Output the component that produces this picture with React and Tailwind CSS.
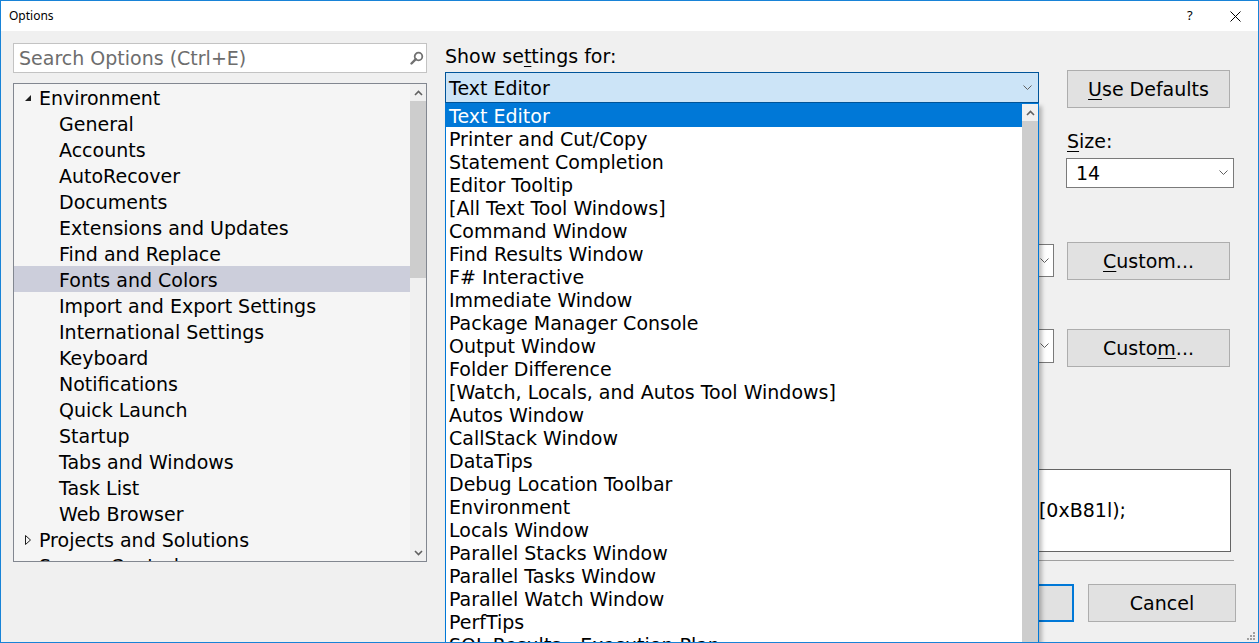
import React from 'react';

const treeItems = [
  { label: 'Environment', level: 0, glyph: 'open' },
  { label: 'General', level: 1 },
  { label: 'Accounts', level: 1 },
  { label: 'AutoRecover', level: 1 },
  { label: 'Documents', level: 1 },
  { label: 'Extensions and Updates', level: 1 },
  { label: 'Find and Replace', level: 1 },
  { label: 'Fonts and Colors', level: 1, selected: true },
  { label: 'Import and Export Settings', level: 1 },
  { label: 'International Settings', level: 1 },
  { label: 'Keyboard', level: 1 },
  { label: 'Notifications', level: 1 },
  { label: 'Quick Launch', level: 1 },
  { label: 'Startup', level: 1 },
  { label: 'Tabs and Windows', level: 1 },
  { label: 'Task List', level: 1 },
  { label: 'Web Browser', level: 1 },
  { label: 'Projects and Solutions', level: 0, glyph: 'closed' },
  { label: 'Source Control', level: 0, glyph: 'closed' },
];

const showItems = [
  'Text Editor',
  'Printer and Cut/Copy',
  'Statement Completion',
  'Editor Tooltip',
  '[All Text Tool Windows]',
  'Command Window',
  'Find Results Window',
  'F# Interactive',
  'Immediate Window',
  'Package Manager Console',
  'Output Window',
  'Folder Difference',
  '[Watch, Locals, and Autos Tool Windows]',
  'Autos Window',
  'CallStack Window',
  'DataTips',
  'Debug Location Toolbar',
  'Environment',
  'Locals Window',
  'Parallel Stacks Window',
  'Parallel Tasks Window',
  'Parallel Watch Window',
  'PerfTips',
  'SQL Results - Execution Plan',
];

function Chevron({ className = '' }) {
  return (
    <svg width="9" height="6" viewBox="0 0 9 6" className={className}>
      <path d="M0.5 0.5 L4.5 4.5 L8.5 0.5" fill="none" stroke="#606060" strokeWidth="1" />
    </svg>
  );
}

function Arrow({ up }) {
  return (
    <svg width="9" height="6" viewBox="0 0 9 6">
      <path d={up ? 'M1 5 L4.5 1.5 L8 5' : 'M1 1 L4.5 4.5 L8 1'} fill="none" stroke="#606060" strokeWidth="1.6" />
    </svg>
  );
}

function Button({ children, className = '' }) {
  return (
    <div className={`h-[38px] bg-[#e1e1e1] border border-[#adadad] flex items-center justify-center ${className}`}>
      {children}
    </div>
  );
}

export default function App() {
  return (
    <div className="w-[1259px] h-[643px] border border-[#1883d7] bg-[#f0f0f0] flex flex-col overflow-hidden relative text-black font-['DejaVu_Sans',Verdana,sans-serif] text-[19px]">
      {/* title bar */}
      <div className="h-[30px] bg-white flex items-center shrink-0 relative">
        <span className="ml-[8px] text-[12px] font-['Noto_Sans',sans-serif]">Options</span>
        <span className="absolute left-[1186px] top-[5px] text-[13px] font-['Noto_Sans',sans-serif]">?</span>
        <svg className="absolute left-[1229px] top-[10px]" width="11" height="11" viewBox="0 0 11 11">
          <path d="M0.5 0.5 L10.5 10.5 M10.5 0.5 L0.5 10.5" stroke="#000" strokeWidth="1" />
        </svg>
      </div>

      <div className="flex-1 flex pl-[12px]">
        {/* left column */}
        <div className="w-[414px] pt-[12px] flex flex-col">
          <div className="h-[30px] bg-white border border-[#c3c3c3] flex items-center justify-between pl-[5px] pr-[2px]">
            <span className="text-[#6d6d6d]">Search Options (Ctrl+E)</span>
            <svg width="14" height="14" viewBox="0 0 14 14">
              <circle cx="8.5" cy="5.5" r="3.8" fill="none" stroke="#717171" strokeWidth="1.8" />
              <path d="M5.8 8.2 L1.5 12.5" stroke="#717171" strokeWidth="2.4" strokeLinecap="round" />
            </svg>
          </div>
          <div className="mt-[10px] h-[479px] border border-[#828790] bg-[#f5f5f5] flex">
            <div className="flex-1 overflow-hidden">
              {treeItems.map((it) => (
                <div
                  key={it.label}
                  className={`h-[26px] leading-[26px] flex items-center whitespace-nowrap pl-[11px] ${it.selected ? 'bg-[#cccedb]' : ''}`}
                >
                  <div className="w-[14px] shrink-0 flex items-center">
                    {it.glyph === 'open' && (
                      <svg width="7" height="7" viewBox="0 0 7 7" className="mt-[2px]">
                        <polygon points="6,0 6,6 0,6" fill="#1e1e1e" />
                      </svg>
                    )}
                    {it.glyph === 'closed' && (
                      <svg width="7" height="10" viewBox="0 0 7 10" className="mt-[1px]">
                        <polygon points="0.5,0.5 5.5,5 0.5,9.5" fill="none" stroke="#1e1e1e" strokeWidth="1" />
                      </svg>
                    )}
                  </div>
                  <span className={`translate-y-[1px] ${it.level === 0 ? '' : 'ml-[20px]'}`}>{it.label}</span>
                </div>
              ))}
            </div>
            <div className="w-[16px] bg-[#f0f0f0] flex flex-col items-center">
              <div className="h-[17px] flex items-center justify-center">
                <Arrow up />
              </div>
              <div className="w-[16px] h-[177px] bg-[#cdcdcd]" />
              <div className="flex-1" />
              <div className="h-[17px] flex items-center justify-center">
                <Arrow />
              </div>
            </div>
          </div>
        </div>

        {/* right column */}
        <div className="relative ml-[18px] w-[791px] pt-[13px] flex flex-col">
          <div className="h-[24px] leading-[24px]">
            Show se<span className="underline underline-offset-[3px]">t</span>tings for:
          </div>
          <div className="mt-[2px] flex items-start">
            <div className="mt-[2px] w-[594px] h-[31px] bg-[#cce4f7] border border-[#005499] flex items-center justify-between pl-[3px] pr-[6px]">
              <span className="translate-y-[1px]">Text Editor</span>
              <Chevron />
            </div>
            <Button className="ml-[28px] w-[163px]">
              <span>
                <span className="underline underline-offset-[3px]">U</span>se Defaults
              </span>
            </Button>
          </div>

          {/* font / size row */}
          <div className="flex mt-[21px]">
            <div className="w-[621px]" />
            <div className="w-[168px]">
              <div className="h-[22px] leading-[22px] pl-[1px] translate-y-[1px]">
                <span className="underline underline-offset-[3px]">S</span>ize:
              </div>
              <div className="mt-[7px] h-[30px] bg-white border border-[#7a7a7a] flex items-center justify-between pl-[9px] pr-[5px]">
                <span>14</span>
                <Chevron />
              </div>
            </div>
          </div>

          {/* item foreground */}
          <div className="flex mt-[54px] items-start">
            <div className="mt-[2px] w-[609px] h-[33px] bg-white border border-[#7a7a7a] flex items-center justify-end pr-[4px]">
              <Chevron />
            </div>
            <Button className="ml-[13px] w-[163px]">
              <span>
                <span className="underline underline-offset-[3px]">C</span>ustom...
              </span>
            </Button>
          </div>

          {/* item background */}
          <div className="flex mt-[49px] items-start">
            <div className="w-[609px] h-[34px] bg-white border border-[#7a7a7a] flex items-center justify-end pr-[4px]">
              <Chevron />
            </div>
            <Button className="ml-[13px] w-[163px]">
              <span>
                Custo<span className="underline underline-offset-[3px]">m</span>...
              </span>
            </Button>
          </div>

          {/* sample */}
          <div className="mt-[102px] w-[786px] h-[83px] bg-white border border-[#646464] flex items-center justify-end pr-[104px]">
            <span>int x = foo[0xB81l);</span>
          </div>

          <div className="mt-[8px] w-[789px] h-[1px] bg-[#a0a0a0]" />

          <div className="mt-[23px] w-[791px] flex justify-end">
            <div className="w-[148px] h-[38px] bg-[#e1e1e1] border-2 border-[#0078d7] flex items-center justify-center">OK</div>
            <Button className="ml-[14px] w-[148px]">Cancel</Button>
          </div>

          {/* open dropdown list */}
          <div className="absolute left-0 top-[72px] w-[594px] h-[560px] bg-white border border-[#0078d7] flex shadow-[3px_3px_4px_rgba(0,0,0,0.25)]">
            <div className="flex-1 overflow-hidden">
              {showItems.map((s, i) => (
                <div
                  key={s}
                  className={`h-[23px] leading-[23px] pl-[3px] whitespace-nowrap ${i === 0 ? 'bg-[#0078d7] text-white' : ''}`}
                >
                  <span className="relative top-[1px]">{s}</span>
                </div>
              ))}
            </div>
            <div className="w-[16px] flex flex-col bg-[#f0f0f0]">
              <div className="h-[17px] flex items-center justify-center">
                <Arrow up />
              </div>
              <div className="flex-1 bg-[#cdcdcd]" />
            </div>
          </div>
        </div>
      </div>

      {/* resize grip */}
      <svg className="absolute right-[3px] bottom-[2px]" width="9" height="9" viewBox="0 0 9 9">
        <rect x="7" y="1" width="2" height="2" fill="#a0a0a0" />
        <rect x="4" y="4" width="2" height="2" fill="#a0a0a0" />
        <rect x="7" y="4" width="2" height="2" fill="#a0a0a0" />
        <rect x="1" y="7" width="2" height="2" fill="#a0a0a0" />
        <rect x="4" y="7" width="2" height="2" fill="#a0a0a0" />
        <rect x="7" y="7" width="2" height="2" fill="#a0a0a0" />
      </svg>
    </div>
  );
}
